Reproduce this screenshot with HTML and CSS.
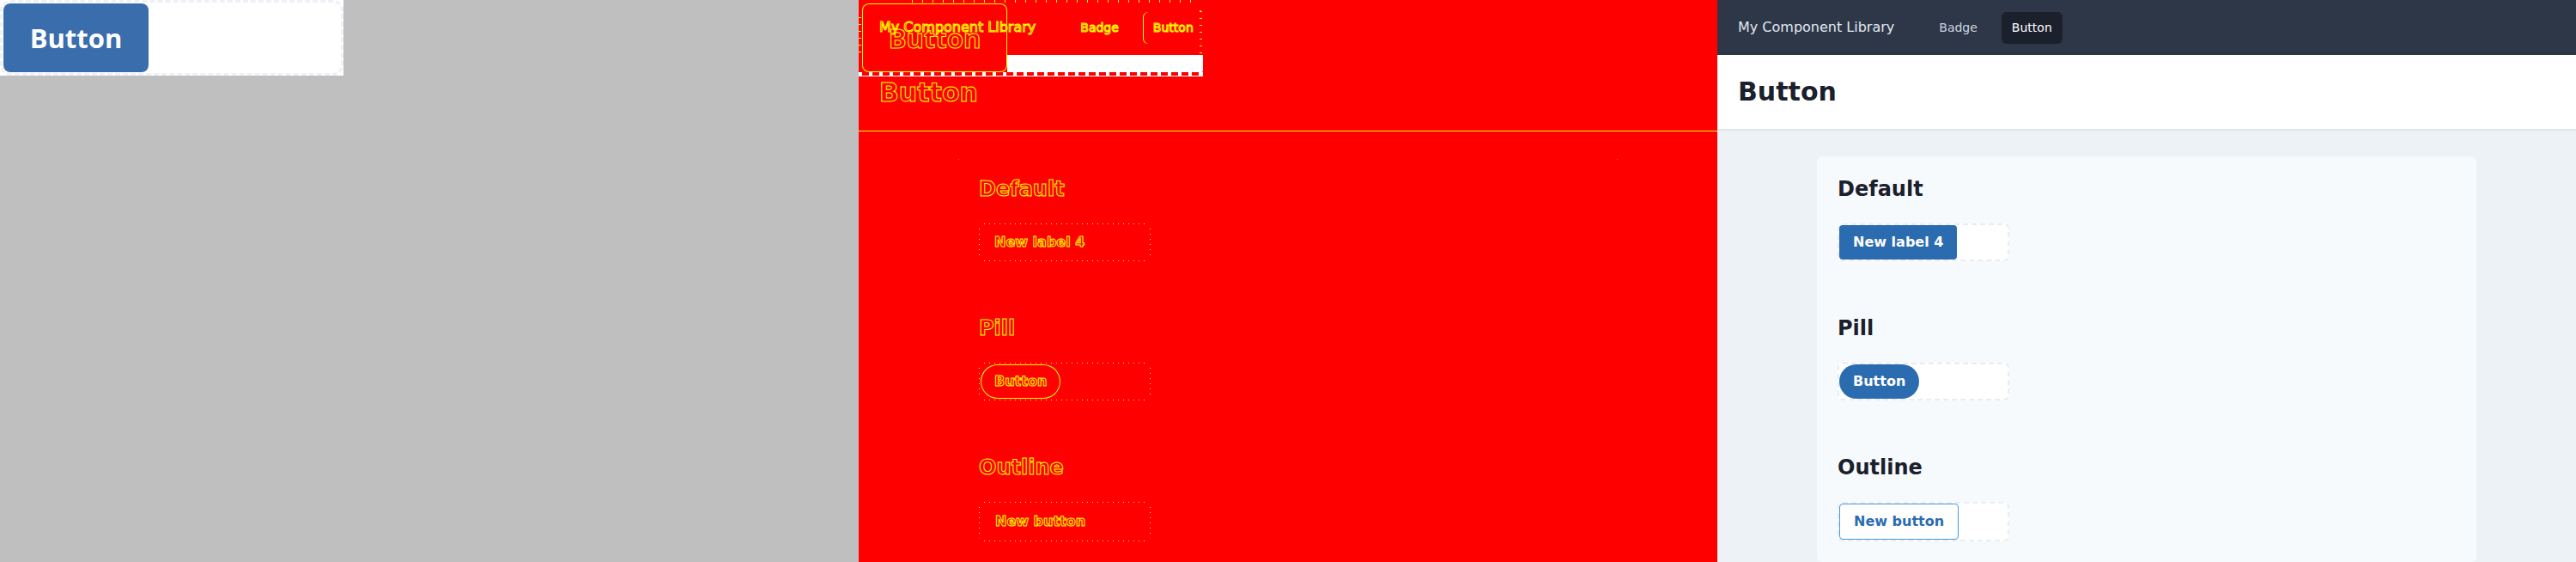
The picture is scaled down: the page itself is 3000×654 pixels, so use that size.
FILE: index.html
```html
<!DOCTYPE html>
<html lang="en">
<head>
<meta charset="utf-8">
<title>Button – My Component Library</title>
<link rel="stylesheet" href="styles.css">
</head>
<body>
<div class="panels">

  <section class="panel shot">
    <div class="preview">
      <div class="preview-frame">
        <span class="big-btn">Button</span>
      </div>
    </div>
  </section>

  <section class="panel diff">
    <div class="app ghost">
      <header class="nav">
        <span class="brand">My Component Library</span>
        <nav class="nav-links">
          <span class="nav-link">Badge</span>
          <span class="nav-link active">Button</span>
        </nav>
      </header>
      <div class="titlebar"><h1 class="page-title">Button</h1></div>
      <main class="main">
        <div class="card">
          <section class="variant">
            <h2 class="variant-title">Default</h2>
            <div class="frame"><span class="btn">New label 4</span></div>
          </section>
          <section class="variant">
            <h2 class="variant-title">Pill</h2>
            <div class="frame"><span class="btn btn-pill">Button</span></div>
          </section>
          <section class="variant">
            <h2 class="variant-title">Outline</h2>
            <div class="frame"><span class="btn btn-outline">New button</span></div>
          </section>
        </div>
      </main>
    </div>
    <div class="shot-edges">
      <div class="edge-top"></div>
      <div class="edge-left"></div>
      <div class="edge-right"></div>
      <span class="edge-btn">Button</span>
      <div class="edge-white"></div>
      <div class="edge-dashes"></div>
      <div class="edge-line"></div>
    </div>
  </section>

  <section class="panel live">
    <div class="app">
      <header class="nav">
        <span class="brand">My Component Library</span>
        <nav class="nav-links">
          <span class="nav-link">Badge</span>
          <span class="nav-link active">Button</span>
        </nav>
      </header>
      <div class="titlebar"><h1 class="page-title">Button</h1></div>
      <main class="main">
        <div class="card">
          <section class="variant">
            <h2 class="variant-title">Default</h2>
            <div class="frame"><span class="btn">New label 4</span></div>
          </section>
          <section class="variant">
            <h2 class="variant-title">Pill</h2>
            <div class="frame"><span class="btn btn-pill">Button</span></div>
          </section>
          <section class="variant">
            <h2 class="variant-title">Outline</h2>
            <div class="frame"><span class="btn btn-outline">New button</span></div>
          </section>
        </div>
      </main>
    </div>
  </section>

</div>
</body>
</html>
```

FILE: styles.css
```css
* { box-sizing: border-box; margin: 0; padding: 0; }

body {
  margin: 0;
  background: #ffffff;
  font-family: "DejaVu Sans", "Liberation Sans", sans-serif;
  overflow: hidden;
}

.panels {
  display: flex;
  width: 3000px;
  height: 654px;
}

.panel {
  flex: none;
  width: 1000px;
  height: 654px;
  position: relative;
  overflow: hidden;
}

/* ---------- left: component preview ---------- */
.shot { background: #bfbfbf; }

.preview {
  width: 400px;
  height: 88px;
  background: #ffffff;
}

.preview-frame {
  width: 100%;
  height: 100%;
  border: 3px dashed #edf1f7;
  border-radius: 12px;
  padding: 1px;
  display: flex;
  align-items: flex-start;
}

.big-btn {
  display: flex;
  align-items: center;
  justify-content: center;
  width: 169px;
  height: 80px;
  background: #3a6dab;
  color: #ffffff;
  border-radius: 8px;
  font-family: "Open Sans", "Noto Sans", sans-serif;
  font-weight: 700;
  font-size: 31px;
}

/* ---------- middle: diff ---------- */
.diff { background: #ff0000; }

.shot-edges {
  position: absolute;
  left: 0;
  top: 0;
  width: 401px;
  height: 89px;
}

.edge-top {
  position: absolute;
  left: 62px;
  top: 0;
  width: 326px;
  height: 3px;
  background: repeating-linear-gradient(90deg, #ffff00 0 1px, transparent 1px 12px);
}

.edge-left,
.edge-right {
  position: absolute;
  top: 20px;
  width: 3px;
  height: 44px;
  background: repeating-linear-gradient(180deg, #ffff00 0 1px, transparent 1px 8px);
}
.edge-left { left: 0; }
.edge-right {
  left: 397px;
  top: 12px;
  height: 52px;
  border-top-right-radius: 10px;
  border-top: 1px solid #ffff00;
}

.edge-btn {
  position: absolute;
  left: 4px;
  top: 4px;
  width: 169px;
  height: 80px;
  display: flex;
  align-items: center;
  justify-content: center;
  border-radius: 8px;
  box-shadow: inset 0 0 0 1px #ffff00;
  font-family: "Open Sans", "Noto Sans", sans-serif;
  font-weight: 700;
  font-size: 31px;
  color: transparent;
  -webkit-text-stroke: 1px #ffff00;
}

.edge-white {
  position: absolute;
  left: 173px;
  top: 64px;
  width: 228px;
  height: 20px;
  background: #ffffff;
  border-bottom-right-radius: 2px;
}

.edge-dashes {
  position: absolute;
  left: 0;
  top: 84px;
  width: 400px;
  height: 4px;
  background: repeating-linear-gradient(90deg, #ffffff 0 4px, transparent 4px 12px);
  border-right: 1px solid #ffffff;
  width: 401px;
}

.edge-line {
  position: absolute;
  left: 0;
  top: 88px;
  width: 401px;
  height: 1px;
  background: #ffffff;
}

/* ---------- app (live page) ---------- */
.app {
  width: 1000px;
  height: 654px;
  background: #edf2f7;
  display: flex;
  flex-direction: column;
}

.nav {
  flex: none;
  height: 64px;
  background: #2d3748;
  display: flex;
  align-items: center;
  padding: 0 24px;
}

.brand {
  font-size: 16px;
  line-height: 20px;
  color: #e2e8f0;
  margin-right: 40px;
}

.nav-links {
  display: flex;
  gap: 16px;
}

.nav-link {
  font-size: 14px;
  line-height: 17px;
  padding: 10px 12px;
  border-radius: 6px;
  color: #cbd5e0;
}

.nav-link.active {
  background: #1a202c;
  color: #ffffff;
}

.titlebar {
  flex: none;
  height: 86px;
  background: #ffffff;
  display: flex;
  align-items: center;
  padding: 0 24px;
  box-shadow: 0 1px 3px rgba(0, 0, 0, 0.1);
  position: relative;
  z-index: 1;
}

.page-title {
  font-size: 30px;
  line-height: 36px;
  font-weight: 700;
  color: #1a202c;
}

.main {
  flex: 1;
  padding: 32px 116px 0;
}

.card {
  background: #f7fafc;
  border-radius: 6px;
  padding: 24px;
  display: flex;
  flex-direction: column;
  gap: 64px;
}

.variant {
  display: flex;
  flex-direction: column;
  align-items: flex-start;
}

.variant-title {
  font-size: 24px;
  line-height: 29px;
  font-weight: 700;
  color: #1a202c;
  margin-bottom: 25px;
}

.frame {
  width: 200px;
  display: flex;
  align-items: flex-start;
  background: #ffffff;
  border: 2px dashed #e8edf3;
  border-radius: 6px;
}

.btn {
  display: block;
  font-size: 16px;
  line-height: 20px;
  font-weight: 700;
  padding: 10px 16px;
  border-radius: 4px;
  background: #2b6cb0;
  color: #ffffff;
  white-space: nowrap;
}

.btn-pill { border-radius: 9999px; }

.btn-outline {
  background: #ffffff;
  color: #2b6cb0;
  border: 1px solid #4299e1;
}

/* ---------- ghost (edge map) variant ---------- */
.ghost,
.ghost .nav,
.ghost .titlebar,
.ghost .frame,
.ghost .btn,
.ghost .nav-link.active {
  background: transparent;
  box-shadow: none;
}

.ghost .brand,
.ghost .nav-link,
.ghost .page-title,
.ghost .variant-title,
.ghost .btn {
  color: transparent;
  -webkit-text-stroke: 1px #ffff00;
}

.ghost .nav-link.active {
  box-shadow: inset 1px 0 0 #ffff00;
}

.ghost .titlebar {
  height: 89px;
  border-bottom: 1px solid #ffff00;
}

.ghost .main { padding-top: 29px; }

.ghost .card {
  background:
    linear-gradient(#ffff00, #ffff00) left top / 3px 1px no-repeat,
    linear-gradient(#ffff00, #ffff00) right top / 3px 1px no-repeat,
    linear-gradient(#ffff00, #ffff00) right top / 1px 4px no-repeat,
    linear-gradient(#ffff00, #ffff00) left top / 1px 4px no-repeat;
}

.ghost .frame {
  border-color: transparent;
  background:
    repeating-linear-gradient(90deg, #ffff00 0 1px, transparent 1px 6px) left top / 100% 1px no-repeat,
    repeating-linear-gradient(90deg, #ffff00 0 1px, transparent 1px 6px) left bottom / 100% 1px no-repeat,
    repeating-linear-gradient(180deg, #ffff00 0 1px, transparent 1px 6px) left top / 1px 100% no-repeat,
    repeating-linear-gradient(180deg, #ffff00 0 1px, transparent 1px 6px) right top / 1px 100% no-repeat;
  background-origin: border-box;
  background-clip: border-box;
}

.ghost .btn-pill {
  box-shadow: inset 0 0 0 1px #ffff00;
}

.ghost .btn-outline {
  border-color: transparent;
}
```
